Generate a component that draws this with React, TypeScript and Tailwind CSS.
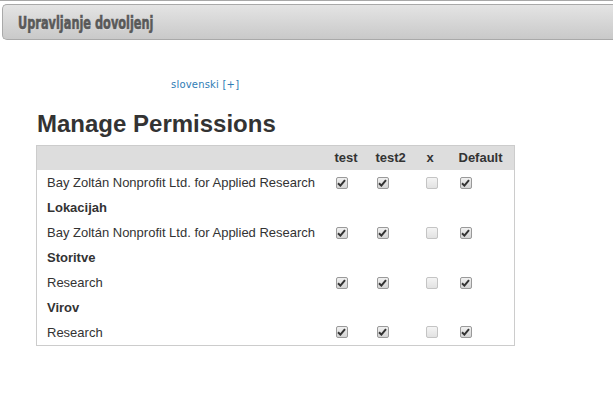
import React from 'react'

type Row =
  | { kind: 'group'; label: string }
  | { kind: 'item'; label: string; values: boolean[] }

const rows: Row[] = [
  { kind: 'item', label: 'Bay Zoltán Nonprofit Ltd. for Applied Research', values: [true, true, false, true] },
  { kind: 'group', label: 'Lokacijah' },
  { kind: 'item', label: 'Bay Zoltán Nonprofit Ltd. for Applied Research', values: [true, true, false, true] },
  { kind: 'group', label: 'Storitve' },
  { kind: 'item', label: 'Research', values: [true, true, false, true] },
  { kind: 'group', label: 'Virov' },
  { kind: 'item', label: 'Research', values: [true, true, false, true] },
]

const columns = [
  { name: 'test', width: 'w-[41px]', pad: 'pl-[11px]' },
  { name: 'test2', width: 'w-[51px]', pad: 'pl-[11px]' },
  { name: 'x', width: 'w-[32px]', pad: 'pl-[9px]' },
  { name: 'Default', width: 'w-[66px]', pad: 'pl-[11px]' },
]

function Check({ checked }: { checked: boolean }) {
  if (!checked) {
    return (
      <span className="block w-[12px] h-[12px] rounded-[2px] border border-[#c4c4c4] bg-gradient-to-b from-[#f4f4f4] to-[#e2e2e2]" />
    )
  }
  return (
    <span className="flex items-center justify-center w-[12px] h-[12px] rounded-[2px] border border-[#9a9a9a] bg-gradient-to-b from-[#f0f0f0] to-[#d4d4d4]">
      <svg width="9" height="8" viewBox="0 0 9 8">
        <path d="M1 4.2 L3.4 6.6 L8 1.2" fill="none" stroke="#333" strokeWidth="2" />
      </svg>
    </span>
  )
}

export default function App() {
  return (
    <main className="w-[613px] h-[395px] bg-white overflow-hidden font-['Liberation_Sans',Arial,sans-serif]">
      <div className="h-px bg-[#a8a8a8]" />
      <header className="mt-[3px] ml-[2px] h-[36px] flex items-center pl-[15px] rounded-l-[5px] border border-r-0 border-[#a9a9a9] bg-gradient-to-b from-[#e4e4e4] to-[#c9c9c9]">
        <h1 className="inline-block origin-left scale-x-[0.63] font-['DejaVu_Sans',sans-serif] font-bold text-[18px] text-[#595959] [text-shadow:0_1px_0_#eee] [-webkit-text-stroke:0.7px_#595959]">
          Upravljanje dovoljenj
        </h1>
      </header>

      <div className="pl-[171px] mt-[31px]">
        <a className="font-['DejaVu_Sans',Verdana,sans-serif] text-[10px] tracking-[0.2px] text-[#2f7cb5] leading-none">slovenski [+]</a>
      </div>

      <section className="pl-[36px] mt-[14px]">
        <h2 className="text-[24px] font-bold text-[#333] leading-[30px] pl-px">Manage Permissions</h2>

        <table className="mt-[6px] w-[478px] border border-[#ccc] border-collapse text-[13px] text-[#333] table-fixed">
          <thead>
            <tr className="bg-[#dddddd] h-[24px]">
              <th className="w-[288px]" />
              {columns.map((c) => (
                <th key={c.name} className={`${c.width} text-left font-bold pl-[10px] leading-[24px]`}>
                  {c.name}
                </th>
              ))}
            </tr>
          </thead>
          <tbody>
            {rows.map((r, i) =>
              r.kind === 'group' ? (
                <tr key={i} className="h-[25px]">
                  <td colSpan={5} className="pl-[10px] font-bold">
                    {r.label}
                  </td>
                </tr>
              ) : (
                <tr key={i} className="h-[25px]">
                  <td className="pl-[10px]">{r.label}</td>
                  {r.values.map((v, j) => (
                    <td key={j} className={columns[j].pad}>
                      <Check checked={v} />
                    </td>
                  ))}
                </tr>
              )
            )}
          </tbody>
        </table>
      </section>
    </main>
  )
}
